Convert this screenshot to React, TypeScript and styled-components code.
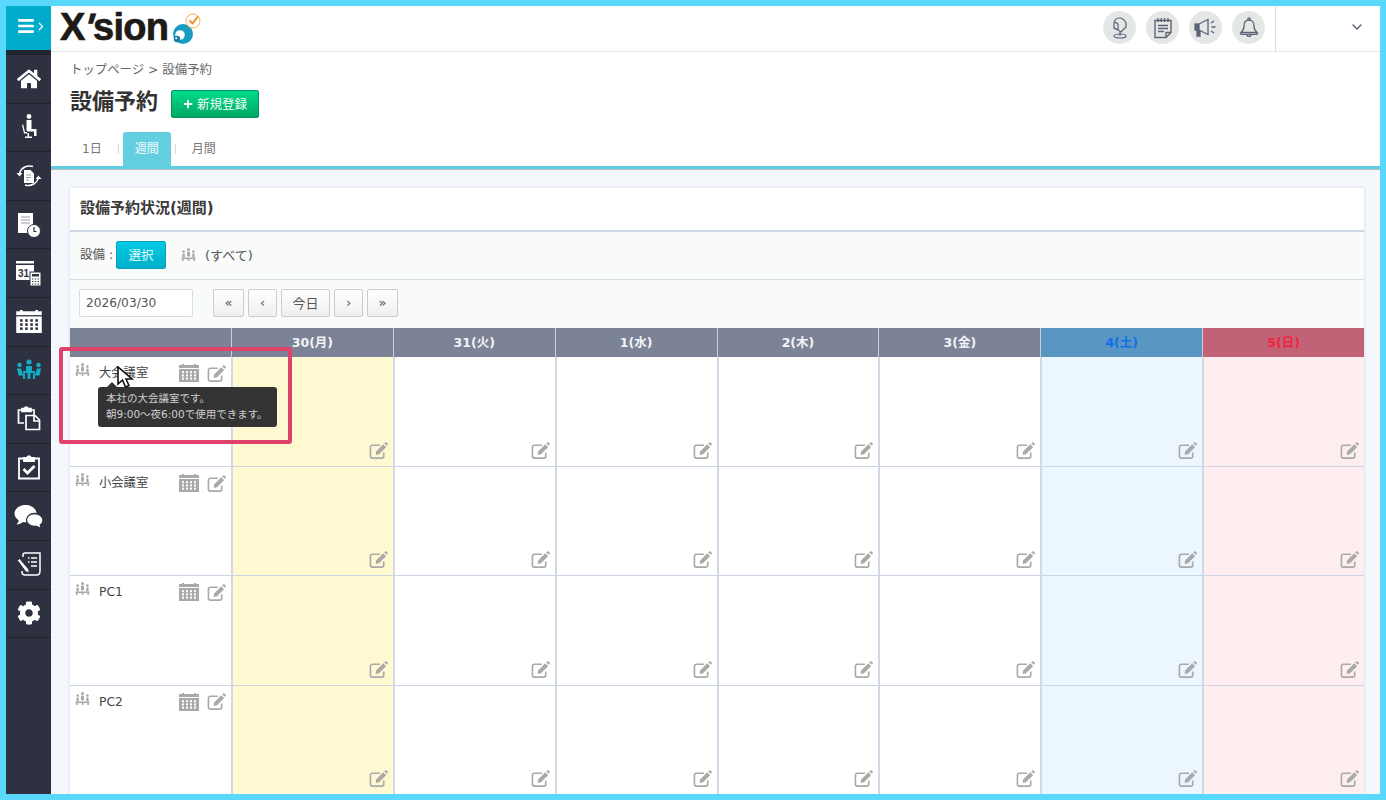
import * as React from 'react';
import styled, { createGlobalStyle } from 'styled-components';
import { FaBars, FaCog, FaHome, FaPlus } from 'react-icons/fa';
import { FiChevronDown } from 'react-icons/fi';

const GlobalStyle = createGlobalStyle`
  html, body {
    margin: 0;
    padding: 0;
    background: #f4f7fb;
    font-family: "DejaVu Sans", "Noto Sans CJK JP", sans-serif;
    color: #444;
  }
  * { box-sizing: border-box; }
`;

const Frame = styled.div`
  position: relative;
  width: 1386px;
  height: 800px;
  border: 6px solid #5ad8fb;
  display: flex;
  overflow: hidden;
  background: #f4f7fb;
`;

const Sidebar = styled.nav`
  width: 45px;
  flex: none;
  background: #2e3240;
  display: flex;
  flex-direction: column;
`;

const MenuToggle = styled.div`
  height: 49px;
  background: #00acc9;
  border-bottom: 5px solid #22252f;
  padding: 0 0 4px 3px;
  display: flex;
  align-items: center;
  justify-content: center;
  gap: 3px;
  color: #fff;
  font-size: 18px;
  svg:last-child { width: 6px; height: 9px; }
`;

const SideItem = styled.div<{ $active?: boolean }>`
  height: 48.6px;
  flex: none;
  display: flex;
  align-items: center;
  justify-content: center;
  border-bottom: 1px solid #20232d;
  color: ${p => (p.$active ? '#12adc6' : '#fff')};
`;

const Main = styled.div`
  flex: 1;
  min-width: 0;
  display: flex;
  flex-direction: column;
`;

const TopBar = styled.header`
  height: 46px;
  flex: none;
  background: #fff;
  border-bottom: 1px solid #e4e8ee;
  display: flex;
  align-items: center;
  justify-content: space-between;
`;

const Logo = styled.div`
  display: flex;
  align-items: center;
  margin-left: 9px;
  gap: 4px;
`;

const LogoText = styled.span`
  font-family: "Liberation Sans", sans-serif;
  font-weight: 700;
  font-size: 38px;
  letter-spacing: -0.7px;
  color: #1d1a18;
  line-height: 42px;
  margin-bottom: 4px;
  -webkit-text-stroke: 0.7px #1d1a18;
`;

const LogoApostrophe = styled.span`
  display: inline-block;
  transform: skewX(-16deg);
`;

const TopRight = styled.div`
  display: flex;
  align-items: center;
  height: 45px;
`;

const RoundIcons = styled.div`
  display: flex;
  gap: 10px;
  padding-right: 10px;
  margin-bottom: 2px;
`;

const RoundIcon = styled.div`
  width: 33px;
  height: 33px;
  border-radius: 50%;
  background: #e5e7e6;
  display: flex;
  align-items: center;
  justify-content: center;
`;

const UserBox = styled.div`
  width: 105px;
  height: 45px;
  border-left: 1px solid #d5dce8;
  display: flex;
  align-items: center;
  justify-content: flex-end;
  padding: 0 15px 3px 0;
  color: #555c6e;
  font-size: 16px;
`;

const PageHead = styled.div`
  height: 117px;
  flex: none;
  background: #fff;
  border-bottom: 3px solid #5fd0e4;
  box-shadow: 0 1px 0 #bbb;
  padding: 9px 0 0 19px;
  display: flex;
  flex-direction: column;
`;

const Breadcrumb = styled.div`
  font-size: 12.4px;
  line-height: 18px;
  color: #666;
`;

const TitleRow = styled.div`
  display: flex;
  align-items: flex-start;
  height: 28px;
  gap: 13px;
  margin-top: 11px;
`;

const Title = styled.h1`
  margin: 0;
  font-size: 22px;
  line-height: 24px;
  font-weight: 700;
  color: #333;
`;

const NewButton = styled.button`
  width: 88px;
  height: 28px;
  padding: 0 0 1px;
  border: 1px solid #06945a;
  border-radius: 2px;
  background: linear-gradient(180deg, #00dc8a, #00a862);
  color: #f2fff9;
  font: inherit;
  font-size: 12.5px;
  display: flex;
  align-items: center;
  justify-content: center;
  gap: 4px;
  svg { width: 10px; height: 10px; }
`;

const Tabs = styled.div`
  display: flex;
  align-items: flex-end;
  height: 34px;
  margin-top: 14px;
`;

const Tab = styled.div<{ $active?: boolean }>`
  width: ${p => (p.$active ? '48px' : 'auto')};
  height: 34px;
  padding: ${p => (p.$active ? '0 0 4px' : '0 12px 4px')};
  display: flex;
  align-items: center;
  justify-content: center;
  font-size: 12px;
  color: ${p => (p.$active ? '#f2fbfd' : '#777')};
  background: ${p => (p.$active ? '#64cfe0' : 'transparent')};
  border-radius: 3px 3px 0 0;
`;

const TabDivider = styled.span`
  width: 1px;
  height: 10px;
  margin: 0 4px 12px;
  background: #d8d8d8;
`;

const Content = styled.div`
  flex: 1;
  min-height: 0;
  padding: 19px 16px 0 19px;
`;

const Card = styled.section`
  background: #fff;
  box-shadow: 0 0 3px rgba(120, 135, 160, 0.25);
`;

const CardTitle = styled.div`
  height: 44px;
  border-bottom: 2px solid #cfd7e4;
  padding: 0 0 6px 10px;
  display: flex;
  align-items: center;
  font-size: 15px;
  font-weight: 700;
  color: #3a3a3a;
`;

const FilterRow = styled.div`
  height: 48px;
  background: #f9fafa;
  border-bottom: 1px solid #d6dce6;
  padding: 0 0 1px 10px;
  display: flex;
  align-items: center;
  font-size: 13px;
  color: #555;
`;

const FilterLabel = styled.span`
  width: 36px;
  font-size: 12.5px;
  margin-bottom: 3px;
  white-space: nowrap;
`;

const SelectButton = styled.button`
  width: 50px;
  height: 28px;
  padding: 0 0 2px;
  border: 1px solid #0b9fb8;
  border-radius: 2px;
  background: linear-gradient(180deg, #00cbe4, #00aec9);
  color: #e8fbff;
  font: inherit;
  font-size: 12.5px;
`;

const AllLabel = styled.div`
  display: flex;
  align-items: center;
  gap: 9px;
  margin: 0 0 2px 15px;
  color: #555;
`;

const DateRow = styled.div`
  height: 48px;
  background: #f9fafa;
  padding: 0 0 2px 9px;
  display: flex;
  align-items: center;
`;

const DateInput = styled.div`
  width: 114px;
  height: 28px;
  background: #fff;
  border: 1px solid #d8dde6;
  border-radius: 2px;
  padding-left: 6px;
  display: flex;
  align-items: center;
  font-size: 12.2px;
  color: #555;
`;

const Pager = styled.div`
  display: flex;
  gap: 4px;
  margin-left: 20px;
`;

const PagerButton = styled.button<{ $w: number }>`
  width: ${p => p.$w}px;
  height: 28px;
  padding: 0 0 1px;
  border: 1px solid #c9cdd3;
  border-radius: 2px;
  background: linear-gradient(180deg, #fff, #efefef);
  color: #555;
  font: inherit;
  font-size: 13px;
`;

const Calendar = styled.div`
  display: grid;
  grid-template-columns: 161px repeat(7, 1fr);
  grid-template-rows: 29px 110px;
  grid-auto-rows: 109.3px;
`;

const HeadCell = styled.div<{ $tone?: 'sat' | 'sun' }>`
  background: ${p => (p.$tone === 'sat' ? '#5a96c2' : p.$tone === 'sun' ? '#c26277' : '#7d8397')};
  color: ${p => (p.$tone === 'sat' ? '#0f6fe6' : p.$tone === 'sun' ? '#f0253b' : '#f2f3f6')};
  border-left: 1px solid #c8d0dc;
  padding-bottom: 2px;
  display: flex;
  align-items: center;
  justify-content: center;
  font-size: 12.5px;
  font-weight: 700;
  &:first-child { border-left: 0; }
`;

const RoomCell = styled.div`
  background: #fff;
  border-bottom: 1px solid #cdd5e4;
  padding: 6px 5px 0 5px;
  display: flex;
  align-items: flex-start;
  font-size: 12.3px;
  color: #444;
`;

const RoomName = styled.span`
  flex: 1;
  margin-left: 9px;
  line-height: 20px;
`;

const RoomTools = styled.div`
  display: flex;
  align-items: center;
  gap: 8px;
  height: 20px;
  color: #a9a9a9;
`;

const DayCell = styled.div<{ $tone?: 'today' | 'sat' | 'sun' }>`
  background: ${p =>
    p.$tone === 'today' ? '#fff9d1' : p.$tone === 'sat' ? '#ebf6ff' : p.$tone === 'sun' ? '#feeef0' : '#fff'};
  border-left: 2px solid #d2d9e6;
  border-bottom: 1px solid #cdd5e4;
  display: flex;
  align-items: flex-end;
  justify-content: flex-end;
  padding: 0 5px 6px 0;
  color: #a9a9a9;
`;

const Highlight = styled.div`
  position: absolute;
  left: 53px;
  top: 341px;
  width: 233px;
  height: 97px;
  border: 4px solid #e0426b;
  border-radius: 3px;
  pointer-events: none;
`;

const Tooltip = styled.div`
  position: absolute;
  left: 92px;
  top: 381px;
  width: 179px;
  height: 40px;
  padding: 4px 8px;
  border-radius: 3px;
  background: #333;
  color: #cfcfcf;
  font-size: 10.5px;
  line-height: 15.5px;
  white-space: nowrap;
  &::before {
    content: '';
    position: absolute;
    left: 9px;
    top: -5px;
    border-left: 5px solid transparent;
    border-right: 5px solid transparent;
    border-bottom: 5px solid #333;
  }
`;

const Cursor = styled.svg`
  position: absolute;
  left: 110px;
  top: 360px;
`;

const EditIcon = () => (
  <svg width="19" height="19" viewBox="0 0 20 20" fill="none">
    <path
      d="M15.500 12v4a2 2 0 0 1-2 2H3.500a2 2 0 0 1-2-2V6.500a2 2 0 0 1 2-2h8"
      stroke="currentColor"
      strokeWidth="1.700"
    />
    <path d="M7.500 11l7.500-7.500 3 3L10.500 14l-3.500.8z" fill="currentColor" />
    <path d="M16 2.500l1-1c.4-.4 1-.4 1.400 0l1.200 1.200c.4.4.4 1 0 1.400l-.7.800z" fill="currentColor" />
  </svg>
);

const PeopleIcon = () => (
  <svg width="15" height="13" viewBox="0 0 15 13" fill="#a9a9a9">
    <circle cx="7.500" cy="1.600" r="1.500" />
    <rect x="6" y="3.600" width="3" height="5" rx="1" />
    <circle cx="2.600" cy="3.600" r="1.300" />
    <rect x="1.400" y="5.400" width="2.400" height="4" rx="1" />
    <circle cx="12.400" cy="3.600" r="1.300" />
    <rect x="11.200" y="5.400" width="2.400" height="4" rx="1" />
    <rect x="0.500" y="9.500" width="14" height="1.600" />
    <rect x="1" y="11" width="1.600" height="2" />
    <rect x="6.700" y="11" width="1.600" height="2" />
    <rect x="12.400" y="11" width="1.600" height="2" />
  </svg>
);

const CalendarGlyph = ({ w = 20, h = 18, dot = '#fff' }: { w?: number; h?: number; dot?: string }) => (
  <svg width={w} height={h} viewBox="0 0 20 18" fill="currentColor">
    <rect x="3" y="0" width="2" height="2" />
    <rect x="15" y="0" width="2" height="2" />
    <rect x="0" y="1" width="20" height="3" />
    <rect x="0" y="5" width="20" height="13" />
    <g fill={dot}>
      {[7.2, 10.4, 13.6].map(y =>
        [4, 8, 12, 16].map(x => <rect key={`${x}-${y}`} x={x - 1} y={y} width="2" height="2" />),
      )}
    </g>
  </svg>
);

const MailboxIcon = () => (
  <svg width="20" height="22" viewBox="0 0 20 22" fill="none" stroke="#5d6475" strokeWidth="1.200">
    <path d="M4 11V6c0-2.500 2.500-5 5-5h1c2.500 0 6 3 6 6v3l-5 5-3-2z" />
    <path d="M4 6c2-1 4 0 4 2v5M4 11l4 2" />
    <path d="M10 15v4" />
    <ellipse cx="10" cy="19" rx="6" ry="2" />
  </svg>
);

const NoteIcon = () => (
  <svg width="20" height="22" viewBox="0 0 20 22" fill="none" stroke="#5d6475" strokeWidth="1.400">
    <path d="M2 3.500h16v12l-5 5H2z" />
    <path d="M13 20.500v-5h5M5 1v4M8.300 1v4M11.600 1v4M15 1v4M5 8.500h10M5 11.500h10M5 14.500h6" />
  </svg>
);

const MegaphoneIcon = () => (
  <svg width="24" height="20" viewBox="0 0 24 20" fill="none" stroke="#5d6475" strokeWidth="1.300">
    <rect x="1" y="6" width="4" height="6" fill="#5d6475" />
    <path d="M5 6l9-4.500v15L5 12" />
    <path d="M3 12v6h3v-6" fill="#5d6475" />
    <path d="M17 5l3-2M17.500 9h4M17 13l3 2" />
  </svg>
);

const BellIcon = () => (
  <svg width="20" height="21" viewBox="0 0 20 21" fill="none" stroke="#5d6475" strokeWidth="1.300">
    <circle cx="10" cy="2" r="1.200" />
    <path d="M10 3.200c-3.500 0-5 2.600-5 5.800 0 3.400-1.200 5-3 6.500h16c-1.800-1.500-3-3.100-3-6.500 0-3.200-1.500-5.800-5-5.800z" />
    <path d="M2 15.500v1.800h16v-1.800M8 17.500c0 2.600 4 2.600 4 0" />
  </svg>
);

const sideIcons: React.ReactNode[] = [
  <FaHome size={24} key="home" />,
  <svg width="16" height="26" viewBox="0 0 16 26" fill="#fff" key="seat">
    <circle cx="8" cy="2.500" r="2.400" />
    <path d="M5.500 6h5v9h5v7h-2.500v-4.500H7c-1 0-1.500-.8-1.500-2z" />
    <path d="M1 11l1.200-.4 1.800 7.400h2v1.400h-3zM6.500 19h1.500v3.500h3V24H4v-1.500h2.500z" />
  </svg>,
  <svg width="26" height="24" viewBox="0 0 26 24" fill="none" key="cycle">
    <path d="M3.500 10C4.500 4 11 .5 17 2.500" stroke="#fff" strokeWidth="1.500" />
    <path d="M22.500 13c-.7 6-7.500 10-13.500 8" stroke="#fff" strokeWidth="1.500" />
    <path d="M0.500 9l3 3.500 3-3.500zM19.500 15l3-3.500 3 3.500z" fill="#fff" />
    <path d="M8 6h6.500l3.500 3.500V19H8z" fill="#fff" />
    <path d="M10 11h5M10 13.500h5M10 16h3" stroke="#9a9ca4" strokeWidth="1" />
  </svg>,
  <svg width="24" height="26" viewBox="0 0 24 26" key="doc-clock">
    <rect x="1" y="1" width="15" height="20" fill="#fff" />
    <path d="M4 5h9M4 8h9M4 11h9" stroke="#9a9ca4" strokeWidth="1" />
    <circle cx="17" cy="19" r="6.500" fill="#fff" stroke="#2e3240" />
    <path d="M17 15v4.500h2.500" stroke="#2e3240" strokeWidth="1.200" fill="none" />
  </svg>,
  <svg width="27" height="26" viewBox="0 0 27 26" key="cal-calc">
    <rect x="1" y="1" width="18" height="19" fill="#fff" />
    <rect x="1" y="3.500" width="18" height="1.500" fill="#2e3240" />
    <text x="3" y="16.500" fontSize="10" fontWeight="700" fill="#2e3240" fontFamily="Liberation Sans, sans-serif">31</text>
    <rect x="15" y="12" width="11" height="14" fill="#fff" stroke="#2e3240" />
    <rect x="17" y="14" width="7" height="2.500" fill="#2e3240" />
    <path d="M17 19h7M17 21.500h7M17 24h7" stroke="#2e3240" strokeDasharray="1.400 1.400" />
  </svg>,
  <CalendarGlyph w={26} h={23} dot="#2e3240" key="calendar" />,
  <svg width="26" height="22" viewBox="0 0 26 22" fill="currentColor" key="meeting">
    <circle cx="13" cy="3" r="2.600" />
    <path d="M10 7h6v5h-6z" />
    <path d="M7 12h12v2h-4.500v6h-3v-6H7z" />
    <circle cx="3.500" cy="6" r="2.200" />
    <path d="M1 9.500h4l1.500 5H9V20H7v-3.500H2.500z" />
    <circle cx="22.500" cy="6" r="2.200" />
    <path d="M25 9.500h-4l-1.500 5H17V20h2v-3.500h4.500z" />
  </svg>,
  <svg width="24" height="25" viewBox="0 0 24 25" fill="none" stroke="#fff" strokeWidth="1.700" key="clips">
    <path d="M14 4h3v5M7 17H1.500V4H5" />
    <path d="M5 5V2.500h2.500c.5-2 3-2 3.500 0H14V5.500H5z" fill="#fff" />
    <path d="M9 9.500h9l4.500 4.500v9.500H9z" />
    <path d="M17 10v5h5" />
  </svg>,
  <svg width="22" height="25" viewBox="0 0 22 25" fill="none" stroke="#fff" strokeWidth="1.800" key="check">
    <path d="M6 3.500H1v20h20v-20h-5" />
    <path d="M6 6V3h3c.5-2.500 3.500-2.500 4 0h3v3z" fill="#fff" />
    <path d="M5.500 14l4 4 7-7" strokeWidth="2.800" />
  </svg>,
  <svg width="29" height="25" viewBox="0 0 29 25" fill="#fff" key="chat">
    <path d="M11.500 1C5.500 1 .500 4.800.500 9.500c0 2.800 1.700 5.200 4.300 6.800-.3 1.500-1 3-2.300 4.200 2.600-.2 4.800-1.200 6.500-2.600 1 .2 1.500.3 2.500.3 6 0 11-3.900 11-8.700S17.500 1 11.500 1z" />
    <path d="M20.500 9.500c-4.500 0-8 3-8 6.500s3.500 6.500 8 6.500c.7 0 1.500-.1 2-.2 1.500 1.200 3.200 1.900 5.500 2-1-1-1.600-2-1.800-3.300 1.800-1.200 2.800-3 2.800-5 0-3.500-4-6.500-8.500-6.500z" stroke="#2e3240" strokeWidth="1.300" />
  </svg>,
  <svg width="26" height="25" viewBox="0 0 26 25" fill="none" stroke="#fff" strokeWidth="1.500" key="form">
    <path d="M7 5V3c0-1 1-2 2-2h15v18c0 2.500-1.500 4-3.500 4H9c-2 0-3-1-3-3v-1" />
    <path d="M12 6h1.500M15 6h6M12 10h1.500M15 10h6M15 14h6" />
    <path d="M1.500 8.500l2-2 9 10.500 1 4-4-1.500z" fill="#fff" stroke="#2e3240" strokeWidth="1" />
  </svg>,
  <FaCog size={24} key="cog" />,
];

const days: { label: string; tone?: 'sat' | 'sun' }[] = [
  { label: '30(月)' },
  { label: '31(火)' },
  { label: '1(水)' },
  { label: '2(木)' },
  { label: '3(金)' },
  { label: '4(土)', tone: 'sat' },
  { label: '5(日)', tone: 'sun' },
];

const rooms = ['大会議室', '小会議室', 'PC1', 'PC2'];

export default function App() {
  return (
    <>
      <GlobalStyle />
      <Frame>
        <Sidebar>
          <MenuToggle>
            <FaBars />
            <svg viewBox="0 0 6 9" fill="none" stroke="#fff" strokeWidth="1.200">
              <path d="M1 1l3.500 3.500L1 8" />
            </svg>
          </MenuToggle>
          {sideIcons.map((icon, i) => (
            <SideItem key={i} $active={i === 6}>
              {icon}
            </SideItem>
          ))}
        </Sidebar>
        <Main>
          <TopBar>
            <Logo>
              <LogoText>
                X<LogoApostrophe>'</LogoApostrophe>sion
              </LogoText>
              <svg width="29" height="31" viewBox="0 0 29 31">
                <circle cx="11" cy="21" r="10" fill="#1a9cc0" />
                <circle cx="8" cy="22" r="4.800" fill="#fff" />
                <circle cx="5" cy="26" r="3.200" fill="#1a7fa8" />
                <circle cx="4.200" cy="25.200" r="1" fill="#fff" />
                <circle cx="21" cy="8" r="7" fill="#fff" stroke="#f6b24a" strokeWidth="1" />
                <path d="M17.500 7.500l3 3 5.500-7" fill="none" stroke="#ef8a1e" strokeWidth="1.800" />
              </svg>
            </Logo>
            <TopRight>
              <RoundIcons>
                <RoundIcon><MailboxIcon /></RoundIcon>
                <RoundIcon><NoteIcon /></RoundIcon>
                <RoundIcon><MegaphoneIcon /></RoundIcon>
                <RoundIcon><BellIcon /></RoundIcon>
              </RoundIcons>
              <UserBox><FiChevronDown /></UserBox>
            </TopRight>
          </TopBar>
          <PageHead>
            <Breadcrumb>トップページ &gt; 設備予約</Breadcrumb>
            <TitleRow>
              <Title>設備予約</Title>
              <NewButton><FaPlus />新規登録</NewButton>
            </TitleRow>
            <Tabs>
              <Tab>1日</Tab>
              <TabDivider />
              <Tab $active>週間</Tab>
              <TabDivider />
              <Tab>月間</Tab>
            </Tabs>
          </PageHead>
          <Content>
            <Card>
              <CardTitle>設備予約状況(週間)</CardTitle>
              <FilterRow>
                <FilterLabel>設備 :</FilterLabel>
                <SelectButton>選択</SelectButton>
                <AllLabel><PeopleIcon />(すべて)</AllLabel>
              </FilterRow>
              <DateRow>
                <DateInput>2026/03/30</DateInput>
                <Pager>
                  <PagerButton $w={31}>«</PagerButton>
                  <PagerButton $w={29}>‹</PagerButton>
                  <PagerButton $w={49}>今日</PagerButton>
                  <PagerButton $w={29}>›</PagerButton>
                  <PagerButton $w={31}>»</PagerButton>
                </Pager>
              </DateRow>
              <Calendar>
                <HeadCell />
                {days.map(d => (
                  <HeadCell key={d.label} $tone={d.tone}>{d.label}</HeadCell>
                ))}
                {rooms.map(room => (
                  <React.Fragment key={room}>
                    <RoomCell>
                      <PeopleIcon />
                      <RoomName>{room}</RoomName>
                      <RoomTools>
                        <CalendarGlyph />
                        <EditIcon />
                      </RoomTools>
                    </RoomCell>
                    {days.map((d, i) => (
                      <DayCell key={d.label} $tone={i === 0 ? 'today' : d.tone}>
                        <EditIcon />
                      </DayCell>
                    ))}
                  </React.Fragment>
                ))}
              </Calendar>
            </Card>
          </Content>
        </Main>
        <Highlight />
        <Tooltip>
          本社の大会議室です。
          <br />
          朝9:00〜夜6:00で使用できます。
        </Tooltip>
        <Cursor width="20" height="24" viewBox="0 0 20 24">
          <path d="M2 1v17l4.500-4 3 7 3.500-1.500-3-6.500h6z" fill="#fff" stroke="#111" strokeWidth="1.600" />
        </Cursor>
      </Frame>
    </>
  );
}
